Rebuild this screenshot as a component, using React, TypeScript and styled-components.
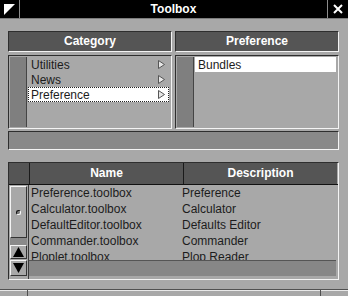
import React from 'react';
import styled, { createGlobalStyle } from 'styled-components';

const GlobalStyle = createGlobalStyle`
  html, body {
    margin: 0;
    padding: 0;
    background: #a8a8a8;
  }
  body {
    font-family: "Liberation Sans", Arial, sans-serif;
  }
`;

const Window = styled.div`
  width: 348px;
  height: 296px;
  display: flex;
  flex-direction: column;
  overflow: hidden;
  background: #a8a8a8;
`;

const TitleBar = styled.div`
  height: 18px;
  flex-shrink: 0;
  display: flex;
  background: #000;
  border-bottom: 1px solid #7c7c7c;
`;

const TitleButton = styled.div<{ $side: 'left' | 'right' }>`
  width: ${p => (p.$side === 'left' ? '19px' : '20px')};
  display: flex;
  align-items: center;
  justify-content: center;
  ${p => (p.$side === 'left' ? 'border-right: 1px solid #8c8c8c;' : 'border-left: 1px solid #8c8c8c;')}
`;

const Title = styled.div`
  flex: 1;
  color: #fff;
  font-weight: bold;
  font-size: 12px;
  line-height: 18px;
  text-align: center;
`;

const Content = styled.div`
  flex: 1;
  display: flex;
  flex-direction: column;
  padding: 12px 9px 0 8px;
`;

const TopRow = styled.div`
  display: grid;
  grid-template-columns: 164px 164px;
  column-gap: 3px;
`;

const Panel = styled.div`
  display: flex;
  flex-direction: column;
  gap: 3px;
`;

const Sunken = styled.div`
  box-sizing: border-box;
  border: 1px solid;
  border-color: #2e2e2e #f4f4f4 #f4f4f4 #2e2e2e;
`;

const PanelHeader = styled(Sunken)`
  height: 21px;
  background: #555;
  color: #fff;
  font-weight: bold;
  font-size: 12px;
  line-height: 19px;
  text-align: center;
`;

const List = styled(Sunken)`
  height: 74px;
  display: flex;
  padding: 1px;
`;

const Gutter = styled.div`
  width: 17px;
  box-sizing: border-box;
  background: #7f7f7f;
  border-right: 1px solid #444;
`;

const Items = styled.div`
  flex: 1;
  display: flex;
  flex-direction: column;
  padding: 0 1px;
`;

const Item = styled.div<{ $selected?: boolean; $focused?: boolean }>`
  height: 15px;
  box-sizing: border-box;
  display: flex;
  align-items: center;
  justify-content: space-between;
  padding: 0 3px 0 2px;
  font-size: 12px;
  color: #1c1c1c;
  background: ${p => (p.$selected ? '#fff' : 'transparent')};
  border: 1px ${p => (p.$focused ? 'dotted #222' : 'solid transparent')};
`;

const StatusField = styled(Sunken)`
  height: 19px;
  margin-top: 2px;
  background: #898989;
`;

const Table = styled(Sunken)`
  height: 118px;
  margin-top: 12px;
  display: flex;
  flex-direction: column;
`;

const HeaderRow = styled.div`
  height: 22px;
  display: flex;
  border-bottom: 1px solid #111;
  box-sizing: border-box;
`;

const HeaderCell = styled.div<{ $width?: number }>`
  ${p => (p.$width ? `width: ${p.$width}px;` : 'flex: 1;')}
  flex-shrink: 0;
  background: #555;
  border-right: 1px solid #1a1a1a;
  color: #fff;
  font-weight: bold;
  font-size: 12px;
  line-height: 21px;
  text-align: center;
  &:last-child {
    border-right: none;
    margin-right: 1px;
  }
`;

const Body = styled.div`
  flex: 1;
  display: flex;
  min-height: 0;
`;

const VScroll = styled.div`
  width: 20px;
  flex-shrink: 0;
  display: flex;
  flex-direction: column;
  padding: 1px 0 0 1px;
  box-sizing: border-box;
  border-right: 1px solid #3a3a3a;
`;

const Raised = styled.div`
  box-sizing: border-box;
  border: 1px solid;
  border-color: #f4f4f4 #333 #333 #f4f4f4;
  width: 17px;
  display: flex;
  align-items: center;
  justify-content: center;
`;

const Thumb = styled(Raised)`
  height: 52px;
  background: #a8a8a8;
`;

const Grip = styled.span`
  width: 3px;
  height: 3px;
  border-radius: 50%;
  background: #777;
  border: 1px solid;
  border-color: #111 #fff #fff #111;
`;

const Trough = styled.div`
  width: 17px;
  height: 7px;
  background: #8a8a8a;
`;

const ArrowButton = styled(Raised)<{ $height: number }>`
  height: ${p => p.$height}px;
  margin-top: ${p => (p.$height > 14 ? '1px' : '0')};
`;

const Right = styled.div`
  flex: 1;
  display: flex;
  flex-direction: column;
  min-width: 0;
`;

const Rows = styled.div`
  flex: 1;
  overflow: hidden;
`;

const Row = styled.div`
  height: 16px;
  display: flex;
  font-size: 12px;
  line-height: 16px;
  color: #1c1c1c;
`;

const Cell = styled.div<{ $width?: number }>`
  ${p => (p.$width ? `width: ${p.$width}px; padding-left: 2px;` : 'flex: 1; padding-left: 1px;')}
  flex-shrink: 0;
  box-sizing: border-box;
  white-space: nowrap;
`;

const HScroll = styled.div`
  height: 16px;
  flex-shrink: 0;
  margin: 0 2px 3px 0;
  background: #878787;
  border-top: 1px solid #555;
  box-sizing: border-box;
`;

const BottomBar = styled.div`
  margin: 9px -9px 0 -8px;
  flex: 1;
  display: flex;
  border-top: 1px solid #505050;
  box-shadow: inset 0 1px 0 #e8e8e8;
`;

const BarSegment = styled.div<{ $width?: number }>`
  ${p => (p.$width ? `width: ${p.$width}px;` : 'flex: 1;')}
  border-right: 1px solid #505050;
  &:last-child {
    border-right: none;
  }
`;

const Pointer: React.FC = () => (
  <svg width="7" height="9" viewBox="0 0 7 9">
    <polygon points="0.5,0.5 6.5,4.5 0.5,8.5" fill="#e6e6e6" stroke="#555" strokeWidth="1" />
  </svg>
);

const Arrow: React.FC<{ dir: 'up' | 'down' }> = ({ dir }) => (
  <svg width="11" height="10" viewBox="0 0 11 10">
    <polygon points={dir === 'up' ? '5.5,0 11,10 0,10' : '0,0 11,0 5.5,10'} fill="#000" />
  </svg>
);

const categories = [
  { name: 'Utilities' },
  { name: 'News' },
  { name: 'Preference', selected: true },
];

const toolboxes = [
  ['Preference.toolbox', 'Preference'],
  ['Calculator.toolbox', 'Calculator'],
  ['DefaultEditor.toolbox', 'Defaults Editor'],
  ['Commander.toolbox', 'Commander'],
  ['Ploplet.toolbox', 'Plop Reader'],
];

export default function App() {
  return (
    <Window>
      <GlobalStyle />
      <TitleBar>
        <TitleButton $side="left">
          <svg width="11" height="11" viewBox="0 0 11 11">
            <polygon points="0,0 11,0 0,11" fill="#fff" />
          </svg>
        </TitleButton>
        <Title>Toolbox</Title>
        <TitleButton $side="right">
          <svg width="10" height="10" viewBox="0 0 10 10">
            <path d="M1 1 L9 9 M9 1 L1 9" stroke="#fff" strokeWidth="2" />
          </svg>
        </TitleButton>
      </TitleBar>
      <Content>
        <TopRow>
          <Panel>
            <PanelHeader>Category</PanelHeader>
            <List>
              <Gutter />
              <Items>
                {categories.map(c => (
                  <Item key={c.name} $selected={c.selected} $focused={c.selected}>
                    <span>{c.name}</span>
                    <Pointer />
                  </Item>
                ))}
              </Items>
            </List>
          </Panel>
          <Panel>
            <PanelHeader>Preference</PanelHeader>
            <List>
              <Gutter />
              <Items>
                <Item $selected>Bundles</Item>
              </Items>
            </List>
          </Panel>
        </TopRow>
        <StatusField />
        <Table>
          <HeaderRow>
            <HeaderCell $width={20} />
            <HeaderCell $width={153}>Name</HeaderCell>
            <HeaderCell>Description</HeaderCell>
          </HeaderRow>
          <Body>
            <VScroll>
              <Thumb>
                <Grip />
              </Thumb>
              <Trough />
              <ArrowButton $height={14}>
                <Arrow dir="up" />
              </ArrowButton>
              <ArrowButton $height={16}>
                <Arrow dir="down" />
              </ArrowButton>
            </VScroll>
            <Right>
              <Rows>
                {toolboxes.map(([file, desc]) => (
                  <Row key={file}>
                    <Cell $width={152}>{file}</Cell>
                    <Cell>{desc}</Cell>
                  </Row>
                ))}
              </Rows>
              <HScroll />
            </Right>
          </Body>
        </Table>
        <BottomBar>
          <BarSegment $width={27} />
          <BarSegment $width={292} />
          <BarSegment />
        </BottomBar>
      </Content>
    </Window>
  );
}
